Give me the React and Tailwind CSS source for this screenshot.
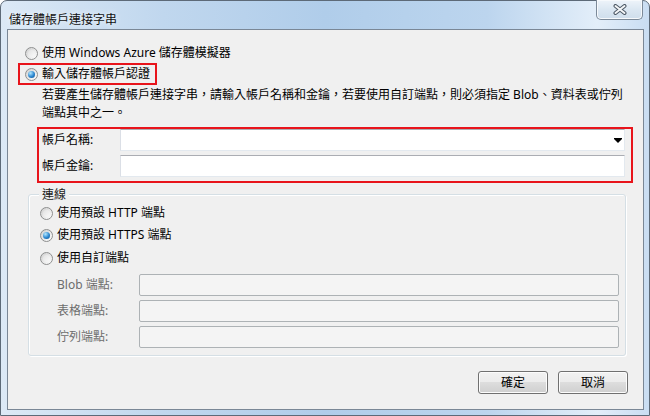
import React from 'react';

function Radio({ checked }) {
  return (
    <span className="flex h-[13px] w-[13px] shrink-0 items-center justify-center rounded-full border border-[#8e8f8f] bg-[linear-gradient(135deg,#cfcfcf,#ffffff)]">
      {checked ? (
        <span className="h-[7px] w-[7px] rounded-full bg-[radial-gradient(circle_at_35%_30%,#b4e8ff,#2b86cf_55%,#0e4f8b)]" />
      ) : (
        <span className="h-[7px] w-[7px] rounded-full bg-[linear-gradient(135deg,#e2e2e2,#fafafa)]" />
      )}
    </span>
  );
}

function TextBox({ combo }) {
  return (
    <div className="flex h-[22px] flex-1 items-center justify-end border border-[#e3e9ef] border-t-[#abadb3] border-l-[#dbdfe6] bg-white pr-[2px]">
      {combo && (
        <svg width="8" height="5" viewBox="0 0 8 5">
          <path d="M0 0h8v1l-4 4l-4-4z" fill="#000" />
        </svg>
      )}
    </div>
  );
}

function DisabledBox() {
  return <div className="h-[22px] flex-1 rounded-[2px] border border-[#adb2b5] bg-[#f4f4f4]" />;
}

function Button({ children }) {
  return (
    <button className="flex h-[23px] w-[70px] items-center justify-center rounded-[3px] border border-[#707070] bg-[linear-gradient(#f2f2f2,#ebebeb_50%,#dddddd_50%,#cfcfcf)] text-[12px] leading-[14px] text-black shadow-[inset_0_0_0_1px_#fcfcfc]">
      {children}
    </button>
  );
}

export default function App() {
  return (
    <div className="h-[416px] w-[650px] overflow-hidden bg-white font-['Noto_Sans','Noto_Sans_CJK_TC',sans-serif] text-[12px] text-black">
      <div className="flex h-[416px] w-[650px] flex-col rounded-t-[7px] border border-[#5d6a78] bg-[linear-gradient(90deg,#dce9f6_0%,#c0d7ee_25%,#b0cdea_50%,#bcd5ee_75%,#e3eef9_92%,#c9ddf2_100%)]">
        {/* title bar */}
        <div className="flex h-[28px] shrink-0 items-start justify-between">
          <span className="ml-[8px] mt-[12px] leading-[14px] text-[#111] [text-shadow:0_0_6px_#fff]">儲存體帳戶連接字串</span>
          <div className="-mt-px mr-[6px] flex h-[20px] w-[47px] items-center justify-center rounded-b-[5px] border border-t-0 border-[#7c8a99] bg-[linear-gradient(#eef4fa,#dbe7f2_50%,#cfdeec)] shadow-[inset_0_0_0_1px_#f6f9fc]">
            <svg width="14" height="11" viewBox="0 0 14 11">
              <path d="M2.5 2L11.5 9M11.5 2L2.5 9" stroke="#4d5966" strokeWidth="4" strokeLinecap="round" />
              <path d="M2.5 2L11.5 9M11.5 2L2.5 9" stroke="#f4f6f8" strokeWidth="2" strokeLinecap="round" />
            </svg>
          </div>
        </div>

        {/* client area */}
        <div className="ml-[6px] flex h-[381px] w-[637px] shrink-0 flex-col border border-[#7a8796] bg-[#f0f0f0]">
          <div className="mt-[13px] flex h-[20px] items-center gap-[4px] pl-[17px]">
            <Radio />
            <span className="leading-[14px]">使用 Windows Azure 儲存體模擬器</span>
          </div>
          <div className="ml-[10px] flex h-[22px] w-[139px] items-center gap-[4px] border-2 border-[#e8141b] pl-[5px]">
            <Radio checked />
            <span className="leading-[14px]">輸入儲存體帳戶認證</span>
          </div>
          <p className="ml-[34px] mt-[1px] whitespace-nowrap leading-[18px]">
            若要產生儲存體帳戶連接字串，請輸入帳戶名稱和金鑰，若要使用自訂端點，則必須指定 Blob、資料表或佇列
            <br />
            端點其中之一。
          </p>

          <div className="ml-[29px] mt-[5px] flex w-[596px] flex-col gap-[4px] border-2 border-[#e8141b] pb-[4px] pr-[6px]">
            <div className="flex h-[22px] items-center">
              <span className="w-[81px] pl-[3px] leading-[14px]">帳戶名稱:</span>
              <TextBox combo />
            </div>
            <div className="flex h-[22px] items-center">
              <span className="w-[81px] pl-[3px] leading-[14px]">帳戶金鑰:</span>
              <TextBox />
            </div>
          </div>

          <div className="relative ml-[20px] mt-[11px] flex h-[162px] w-[598px] flex-col rounded-[3px] border border-[#d5dfe5] pl-[11px] pr-[6px] pt-[7px] shadow-[1px_1px_0_#ffffff,inset_1px_1px_0_#ffffff]">
            <span className="absolute left-[10px] top-[-8px] bg-[#f0f0f0] px-[3px] leading-[16px] text-[#222]">連線</span>
            <div className="flex h-[22px] items-center gap-[4px]">
              <Radio />
              <span className="leading-[14px]">使用預設 HTTP 端點</span>
            </div>
            <div className="flex h-[22px] items-center gap-[4px]">
              <Radio checked />
              <span className="leading-[14px]">使用預設 HTTPS 端點</span>
            </div>
            <div className="mt-[1px] flex h-[22px] items-center gap-[4px]">
              <Radio />
              <span className="leading-[14px]">使用自訂端點</span>
            </div>
            <div className="mt-[5px] flex flex-col gap-[4px]">
              {['Blob 端點:', '表格端點:', '佇列端點:'].map((label) => (
                <div key={label} className="flex h-[22px] items-center">
                  <span className="w-[99px] pl-[17px] leading-[14px] text-[#6d6d6d]">{label}</span>
                  <DisabledBox />
                </div>
              ))}
            </div>
          </div>

          <div className="mt-[15px] flex justify-end gap-[10px] pr-[15px]">
            <Button>確定</Button>
            <Button>取消</Button>
          </div>
        </div>
      </div>
    </div>
  );
}
